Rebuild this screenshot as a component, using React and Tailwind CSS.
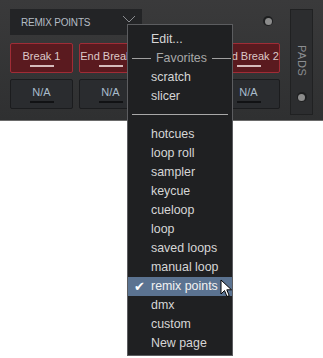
import React from "react";

const font = { fontFamily: '"Liberation Sans", Arial, sans-serif' };

function Pad({ label, red }) {
  return (
    <div
      className={
        "relative flex h-[30px] w-[63px] flex-col items-center justify-center overflow-hidden rounded-[2px] border " +
        (red ? "border-[#a02c36] bg-[#5a1a1f]" : "border-[#1b1c1e] bg-[#2a2c2f]")
      }
    >
      <span
        className={
          "mt-[-4px] whitespace-nowrap text-[11px] leading-none " +
          (red ? "text-[#dcc8c8]" : "text-[#a9bccc]")
        }
      >
        {label}
      </span>
      <div
        className={
          "absolute bottom-[5px] left-1/2 h-[2px] w-[24px] -translate-x-1/2 " +
          (red ? "bg-[#d6bcbc]" : "bg-[#111214]")
        }
      />
    </div>
  );
}

function Item({ children, selected }) {
  return (
    <div
      className={
        "relative flex h-[19px] items-center pl-[23px] text-[12.4px] leading-none " +
        (selected ? "bg-[#5b7391] text-[#f2f2f2]" : "text-[#d6d6d6]")
      }
    >
      {selected && (
        <span className="absolute left-[6px] top-[3px] text-[13px] leading-none text-white">✔</span>
      )}
      {children}
    </div>
  );
}

function Knob() {
  return (
    <div className="flex h-[10px] w-[10px] items-center justify-center rounded-full bg-[#1e1f20]">
      <div className="h-[7px] w-[7px] rounded-full bg-[#8c8c8c]" />
    </div>
  );
}

export default function App() {
  return (
    <div className="relative h-[358px] w-[323px] overflow-hidden bg-white" style={font}>
      <div className="flex h-[121px] border-b border-[#6a6a6a] bg-gradient-to-b from-[#3a3a3b] to-[#2f3031] pl-[10px] pt-[9px]">
        <div className="flex w-[270px] shrink-0 flex-col">
          <div className="flex items-start">
            <div className="flex h-[26px] w-[132px] items-center justify-between bg-[#232426] pl-[11px] pr-[6px]">
              <span className="text-[10px] tracking-[-0.2px] text-[#b4bcc4]">REMIX POINTS</span>
              <svg width="14" height="8" viewBox="0 0 14 8" className="mt-[-6px]">
                <path d="M1 1 L7 7 L13 1" fill="none" stroke="#8a8c90" strokeWidth="1" />
              </svg>
            </div>
            <div className="ml-[121px] mt-[7px]">
              <Knob />
            </div>
          </div>
          <div className="mt-[8px] grid grid-cols-[repeat(4,63px)] gap-x-[6px] gap-y-[6px]">
            <Pad label="Break 1" red />
            <Pad label="End Break 1" red />
            <Pad label="Break 2" red />
            <Pad label="End Break 2" red />
            <Pad label="N/A" />
            <Pad label="N/A" />
            <Pad label="N/A" />
            <Pad label="N/A" />
          </div>
        </div>
        <div className="ml-[10px] flex h-[106px] w-[23px] flex-col items-center border border-[#202122] bg-[#2c2d2f]">
          <span
            className="mt-[35px] text-[11px] tracking-[0.6px] text-[#8c8e92]"
            style={{ writingMode: "vertical-rl" }}
          >
            PADS
          </span>
          <div className="mt-auto mb-[12px]">
            <Knob />
          </div>
        </div>
      </div>

      <div className="absolute left-[127px] top-[24px] h-[332px] w-[106px] border border-[#5c5d60] bg-[#1f2022] pt-[5px]">
        <Item>Edit...</Item>
        <div className="flex h-[19px] items-center text-[12.4px] leading-none text-[#a8a8a8]">
          <div className="ml-[4px] h-px w-[19px] bg-[#a0a0a0]" />
          <span className="ml-[5px]">Favorites</span>
          <div className="ml-[5px] h-px w-[19px] bg-[#a0a0a0]" />
        </div>
        <Item>scratch</Item>
        <Item>slicer</Item>
        <div className="flex h-[19px] items-center">
          <div className="mx-[4px] mt-[-2px] h-px w-full bg-[#a8a8a8]" />
        </div>
        <Item>hotcues</Item>
        <Item>loop roll</Item>
        <Item>sampler</Item>
        <Item>keycue</Item>
        <Item>cueloop</Item>
        <Item>loop</Item>
        <Item>saved loops</Item>
        <Item>manual loop</Item>
        <Item selected>remix points</Item>
        <Item>dmx</Item>
        <Item>custom</Item>
        <Item>New page</Item>
      </div>

      <svg className="absolute left-[220px] top-[279px]" width="13" height="20" viewBox="0 0 13 20">
        <path
          d="M1 1 L1 15 L4.5 11.5 L7 17.5 L9.2 16.6 L6.8 10.8 L11.5 10.8 Z"
          fill="white"
          stroke="black"
          strokeWidth="1"
          strokeLinejoin="miter"
        />
      </svg>
    </div>
  );
}
